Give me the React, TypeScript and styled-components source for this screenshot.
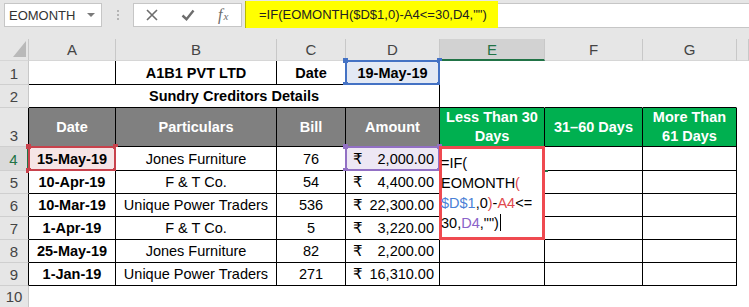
import React from "react";
import styled, { createGlobalStyle } from "styled-components";

const GlobalStyle = createGlobalStyle`
  html, body { margin: 0; padding: 0; background: #fff; }
  body { font-family: "Liberation Sans", Arial, sans-serif; overflow: hidden; }
`;

const GREEN = "#00b050";
const GREY_HEAD = "#808080";
const XL_GREEN = "#217346";

const widths = [29, 87, 161, 69, 94, 105, 98, 94, 12];
const letters = ["A", "B", "C", "D", "E", "F", "G"];

const rows = [
  { date: "15-May-19", party: "Jones Furniture", bill: "76", amount: "2,000.00" },
  { date: "10-Apr-19", party: "F & T Co.", bill: "54", amount: "4,400.00" },
  { date: "10-Mar-19", party: "Unique Power Traders", bill: "536", amount: "22,300.00" },
  { date: "1-Apr-19", party: "F & T Co.", bill: "5", amount: "3,220.00" },
  { date: "25-May-19", party: "Jones Furniture", bill: "82", amount: "2,200.00" },
  { date: "1-Jan-19", party: "Unique Power Traders", bill: "271", amount: "16,310.00" },
];

const Page = styled.div`
  width: 749px;
  height: 307px;
  overflow: hidden;
  background: #fff;
`;

/* ---------- formula bar ---------- */

const FormulaBar = styled.div`
  height: 39px;
  box-sizing: border-box;
  padding: 3px 0 0 4px;
  background: #e6e6e6;
  display: flex;
  align-items: flex-start;
`;

const NameBox = styled.div`
  width: 98px;
  height: 24px;
  box-sizing: border-box;
  background: #fff;
  border: 1px solid #c6c6c6;
  display: flex;
  align-items: center;
  justify-content: space-between;
  padding: 0 6px 0 4px;
  font-size: 13px;
  color: #333;
`;

const DropArrow = styled.span`
  width: 0;
  height: 0;
  border-left: 4px solid transparent;
  border-right: 4px solid transparent;
  border-top: 4px solid #7a7a7a;
`;

const Grip = styled.div`
  width: 31px;
  height: 24px;
  display: flex;
  flex-direction: column;
  align-items: center;
  justify-content: center;
  gap: 2px;
  span {
    width: 2px;
    height: 2px;
    background: #b4b4b4;
  }
`;

const FuncBox = styled.div`
  width: 109px;
  height: 24px;
  box-sizing: border-box;
  background: #fff;
  border: 1px solid #c6c6c6;
  display: flex;
  margin-right: 3px;
`;

const FuncSlot = styled.div`
  flex: 1;
  display: flex;
  align-items: center;
  justify-content: center;
  color: #6d6d6d;
`;

const Fx = styled.span`
  font-family: "Liberation Serif", "Times New Roman", serif;
  font-style: italic;
  font-size: 16px;
  color: #6d6d6d;
  sub {
    font-size: 11px;
    vertical-align: 0;
    margin-left: 1px;
  }
`;

const FormulaInput = styled.div`
  flex: 1;
  height: 25px;
  box-sizing: border-box;
  background: #fff;
  border-top: 1px solid #c6c6c6;
  border-bottom: 1px solid #c6c6c6;
  display: flex;
  align-items: flex-start;
`;

const Highlight = styled.span`
  height: 27px;
  margin-top: -3px;
  box-sizing: border-box;
  padding: 0 11px 0 13px;
  background: #ffff00;
  border-left: 1px solid #b9b900;
  display: flex;
  align-items: center;
  font-size: 13px;
  color: #222;
`;

/* ---------- grid ---------- */

const Sheet = styled.table`
  border-collapse: separate;
  border-spacing: 0;
  table-layout: fixed;
  width: 749px;
  font-size: 14.5px;
  color: #000;
`;

const Row = styled.tr<{ $h: number }>`
  height: ${(p) => p.$h}px;
`;

const ColHead = styled.th<{ $active?: boolean }>`
  padding: 0;
  height: 22px;
  box-sizing: border-box;
  font-weight: 400;
  font-size: 15px;
  color: ${(p) => (p.$active ? XL_GREEN : "#444")};
  background: ${(p) => (p.$active ? "#d2d2d2" : "#e6e6e6")};
  border-right: 1px solid #c8c8c8;
  border-bottom: ${(p) => (p.$active ? `2px solid ${XL_GREEN}` : "1px solid #d6d6d6")};
  text-align: center;
  vertical-align: middle;
`;

const Corner = styled.th`
  padding: 0;
  background: #e6e6e6;
  border-right: 1px solid #c8c8c8;
  border-bottom: 1px solid #d6d6d6;
  text-align: right;
  vertical-align: bottom;
  line-height: 0;
`;

const RowHead = styled.th<{ $edge: string; $active?: boolean }>`
  padding: 0 0 2px 0;
  box-sizing: border-box;
  font-weight: 400;
  font-size: 15px;
  color: ${(p) => (p.$active ? XL_GREEN : "#444")};
  background: ${(p) => (p.$active ? "#dadada" : "#e6e6e6")};
  border-right: ${(p) => (p.$active ? 2 : 1)}px solid ${(p) => p.$edge};
  border-bottom: 1px solid #cfcfcf;
  text-align: center;
  vertical-align: bottom;
`;

const Cell = styled.td<{
  $r?: boolean;
  $b?: boolean;
  $bg?: string;
  $fg?: string;
  $bold?: boolean;
  $wrap?: boolean;
}>`
  position: relative;
  padding: 0 4px;
  box-sizing: border-box;
  border-right: 1px solid ${(p) => (p.$r ? "#000" : "transparent")};
  border-bottom: 1px solid ${(p) => (p.$b ? "#000" : "transparent")};
  background: ${(p) => p.$bg || "#fff"};
  color: ${(p) => p.$fg || "#000"};
  font-weight: ${(p) => (p.$bold ? 700 : 400)};
  text-align: center;
  vertical-align: middle;
  white-space: nowrap;
  line-height: ${(p) => (p.$wrap ? "19px" : "20px")};
`;

const Acct = styled.span`
  display: flex;
  justify-content: space-between;
  align-items: baseline;
  padding: 0 1px 0 3px;
`;

const Rupee = styled.span`
  font-family: "DejaVu Sans", "Noto Sans", sans-serif;
  font-size: 15px;
`;

const Mark = styled.span<{ $c: string }>`
  position: absolute;
  top: -1px;
  left: -1px;
  right: -1px;
  bottom: -1px;
  border: 2px solid ${(p) => p.$c};
  pointer-events: none;
`;

const Handle = styled.span<{ $c: string; $v: "top" | "bottom"; $h: "left" | "right" }>`
  position: absolute;
  width: 5px;
  height: 5px;
  background: ${(p) => p.$c};
  ${(p) => p.$v}: -4px;
  ${(p) => p.$h}: -4px;
`;

const FillHandle = styled.span`
  position: absolute;
  right: -4px;
  bottom: -2px;
  width: 3px;
  height: 2px;
  background: ${XL_GREEN};
  z-index: 6;
`;

const EditBox = styled.div`
  position: absolute;
  top: -1px;
  left: -1px;
  width: 106px;
  height: 94px;
  box-sizing: border-box;
  border: 3px solid #ef4a50;
  background: #fff;
  z-index: 5;
  padding: 4px 0 0 0;
  text-align: left;
  font-size: 14.5px;
  line-height: 20px;
  color: #000;
`;

const EditLine = styled.div`
  margin-left: -1px;
  white-space: nowrap;
`;

const Ref = styled.span<{ $c: string }>`
  color: ${(p) => p.$c};
`;

const Caret = styled.span`
  display: inline-block;
  width: 1px;
  height: 17px;
  background: #000;
  vertical-align: -3px;
  margin-left: 1px;
`;

const Selection = ({ color }: { color: string }) => (
  <Mark $c={color}>
    <Handle $c={color} $v="top" $h="left" />
    <Handle $c={color} $v="top" $h="right" />
    <Handle $c={color} $v="bottom" $h="left" />
    <Handle $c={color} $v="bottom" $h="right" />
  </Mark>
);

const CrossIcon = () => (
  <svg width="12" height="12" viewBox="0 0 12 12">
    <path d="M1 1 L11 11 M11 1 L1 11" stroke="#6d6d6d" strokeWidth="1.6" fill="none" />
  </svg>
);

const CheckIcon = () => (
  <svg width="14" height="12" viewBox="0 0 14 12">
    <path d="M1.5 6.5 L5.5 10.2 L12.5 1.5" stroke="#6d6d6d" strokeWidth="2.4" fill="none" />
  </svg>
);

const rowHeights = [24, 23, 38, 24, 23, 23, 23, 23, 23, 22];

export default function App() {
  return (
    <Page>
      <GlobalStyle />
      <FormulaBar>
        <NameBox>
          EOMONTH
          <DropArrow />
        </NameBox>
        <Grip>
          <span />
          <span />
          <span />
        </Grip>
        <FuncBox>
          <FuncSlot>
            <CrossIcon />
          </FuncSlot>
          <FuncSlot>
            <CheckIcon />
          </FuncSlot>
          <FuncSlot>
            <Fx>
              f<sub>x</sub>
            </Fx>
          </FuncSlot>
        </FuncBox>
        <FormulaInput>
          <Highlight>=IF(EOMONTH($D$1,0)-A4&lt;=30,D4,"")</Highlight>
        </FormulaInput>
      </FormulaBar>

      <Sheet>
        <colgroup>
          {widths.map((w, i) => (
            <col key={i} style={{ width: w }} />
          ))}
        </colgroup>
        <tbody>
          <Row $h={22}>
            <Corner>
              <svg width="13" height="16" viewBox="0 0 13 16" style={{ marginRight: 2, marginBottom: 3 }}>
                <polygon points="13,0 13,16 0,16" fill="#b9b9b9" />
              </svg>
            </Corner>
            {letters.map((l) => (
              <ColHead key={l} $active={l === "E"}>
                {l}
              </ColHead>
            ))}
            <ColHead />
          </Row>

          <Row $h={rowHeights[0]}>
            <RowHead $edge="#c8c8c8">1</RowHead>
            <Cell $r $b />
            <Cell $r $b $bold>
              A1B1 PVT LTD
            </Cell>
            <Cell $r $b $bold>
              Date
            </Cell>
            <Cell $r $b $bold $bg="#e3e9f4">
              19-May-19
              <Selection color="#4472c4" />
            </Cell>
            <Cell />
            <Cell />
            <Cell />
            <Cell />
          </Row>

          <Row $h={rowHeights[1]}>
            <RowHead $edge="#c8c8c8">2</RowHead>
            <Cell colSpan={4} $r $b $bold>
              Sundry Creditors Details
            </Cell>
            <Cell $b />
            <Cell $b />
            <Cell $b />
            <Cell />
          </Row>

          <Row $h={rowHeights[2]}>
            <RowHead $edge="#000">3</RowHead>
            <Cell $r $b $bold $bg={GREY_HEAD} $fg="#fff">
              Date
            </Cell>
            <Cell $r $b $bold $bg={GREY_HEAD} $fg="#fff">
              Particulars
            </Cell>
            <Cell $r $b $bold $bg={GREY_HEAD} $fg="#fff">
              Bill
            </Cell>
            <Cell $r $b $bold $bg={GREY_HEAD} $fg="#fff">
              Amount
            </Cell>
            <Cell $r $b $bold $wrap $bg={GREEN} $fg="#fff">
              Less Than 30
              <br />
              Days
            </Cell>
            <Cell $r $b $bold $bg={GREEN} $fg="#fff">
              31–60 Days
            </Cell>
            <Cell $r $b $bold $wrap $bg={GREEN} $fg="#fff">
              More Than
              <br />
              61 Days
            </Cell>
            <Cell />
          </Row>

          {rows.map((r, i) => {
            const first = i === 0;
            return (
              <Row key={i} $h={rowHeights[3 + i]}>
                <RowHead $edge={first ? XL_GREEN : "#000"} $active={first}>
                  {4 + i}
                </RowHead>
                <Cell $r $b $bold $bg={first ? "#f6e5e6" : undefined}>
                  {r.date}
                  {first && <Selection color="#c8424c" />}
                </Cell>
                <Cell $r $b>
                  {r.party}
                </Cell>
                <Cell $r $b>
                  {r.bill}
                </Cell>
                <Cell $r $b $bg={first ? "#ede7f4" : undefined}>
                  <Acct>
                    <Rupee>₹</Rupee>
                    <span>{r.amount}</span>
                  </Acct>
                  {first && <Selection color="#9270c4" />}
                </Cell>
                <Cell $r $b>
                  {first && (
                    <>
                      <EditBox>
                        <EditLine>=IF(</EditLine>
                        <EditLine>
                          EOMONTH<Ref $c="#e0474c">(</Ref>
                        </EditLine>
                        <EditLine>
                          <Ref $c="#4a7fd6">$D$1</Ref>,0<Ref $c="#e0474c">)</Ref>-<Ref $c="#e0474c">A4</Ref>&lt;=
                        </EditLine>
                        <EditLine>
                          30,<Ref $c="#8a63c9">D4</Ref>,"")
                          <Caret />
                        </EditLine>
                      </EditBox>
                      <FillHandle />
                    </>
                  )}
                </Cell>
                <Cell $r $b />
                <Cell $r $b />
                <Cell />
              </Row>
            );
          })}

          <Row $h={rowHeights[9]}>
            <RowHead $edge="#c8c8c8">10</RowHead>
            <Cell />
            <Cell />
            <Cell />
            <Cell />
            <Cell />
            <Cell />
            <Cell />
            <Cell />
          </Row>
        </tbody>
      </Sheet>
    </Page>
  );
}
